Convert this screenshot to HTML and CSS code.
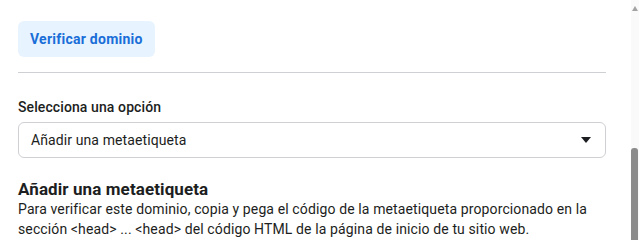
FILE: index.html
```html
<!DOCTYPE html>
<html lang="es">
<head>
  <meta charset="UTF-8" />
  <meta name="viewport" content="width=device-width, initial-scale=1" />
  <title>Verificar dominio</title>
  <link rel="stylesheet" href="styles.css">
</head>
<body>
  <div class="panel">
    <div class="top">
      <button type="button" class="verify-btn">Verificar dominio</button>
    </div>
    <hr class="divider">

    <label class="field-label" for="method">Selecciona una opción</label>
    <div class="select-box" id="method">
      <span>Añadir una metaetiqueta</span>
      <span class="caret"></span>
    </div>

    <h2 class="section-title">Añadir una metaetiqueta</h2>
    <p class="section-text">Para verificar este dominio, copia y pega el código de la metaetiqueta proporcionado en la sección &lt;head&gt; ... &lt;head&gt; del código HTML de la página de inicio de tu sitio web.</p>
  </div>

  <!-- barra de desplazamiento -->
  <div class="scrollbar">
    <span class="scroll-up"></span>
    <span class="scroll-thumb"></span>
  </div>
</body>
</html>
```

FILE: styles.css
```css
body {
  margin: 0;
  font-family: Roboto, "Liberation Sans", sans-serif;
  background-color: #fff;
  color: #1c1e21;
  overflow: hidden;
}

.panel {
  padding: 21px 33px 0 18px;
}

.verify-btn {
  height: 36px;
  padding: 0 12px;
  border: none;
  border-radius: 6px;
  background-color: #e7f3ff;
  color: #1a6ed8;
  font-family: inherit;
  font-size: 14px;
  font-weight: bold;
  letter-spacing: 0.25px;
  cursor: pointer;
}

.divider {
  margin: 15px 0 0;
  border: none;
  border-top: 1px solid #ced0d4;
}

.field-label {
  display: block;
  margin-top: 25px;
  font-size: 14px;
  font-weight: 500;
  line-height: 18px;
  letter-spacing: 0.1px;
}

.select-box {
  display: flex;
  align-items: center;
  justify-content: space-between;
  height: 36px;
  margin-top: 6px;
  padding: 0 14px 0 12px;
  border: 1px solid #ced0d4;
  border-radius: 6px;
  box-sizing: border-box;
  font-size: 14px;
  letter-spacing: 0.1px;
}

.caret {
  width: 0;
  height: 0;
  border-left: 5px solid transparent;
  border-right: 5px solid transparent;
  border-top: 6px solid #1c1e21;
}

.section-title {
  margin: 21px 0 0;
  font-size: 17px;
  font-weight: bold;
  line-height: 20px;
  letter-spacing: 0.1px;
}

.section-text {
  margin: 0;
  font-size: 14px;
  line-height: 20px;
  letter-spacing: 0.12px;
  color: #1c1e21;
}

.scrollbar {
  position: absolute;
  top: 0;
  right: 0;
  width: 8px;
  height: 240px;
  background-color: #fafafa;
}

.scroll-up {
  position: absolute;
  top: 6px;
  left: 1px;
  width: 0;
  height: 0;
  border-left: 3px solid transparent;
  border-right: 3px solid transparent;
  border-bottom: 5px solid #a3a3a3;
}

.scroll-thumb {
  position: absolute;
  top: 148px;
  left: 0;
  width: 7px;
  bottom: 0;
  border-radius: 3px 3px 0 0;
  background-color: #8c8c8c;
}
```
